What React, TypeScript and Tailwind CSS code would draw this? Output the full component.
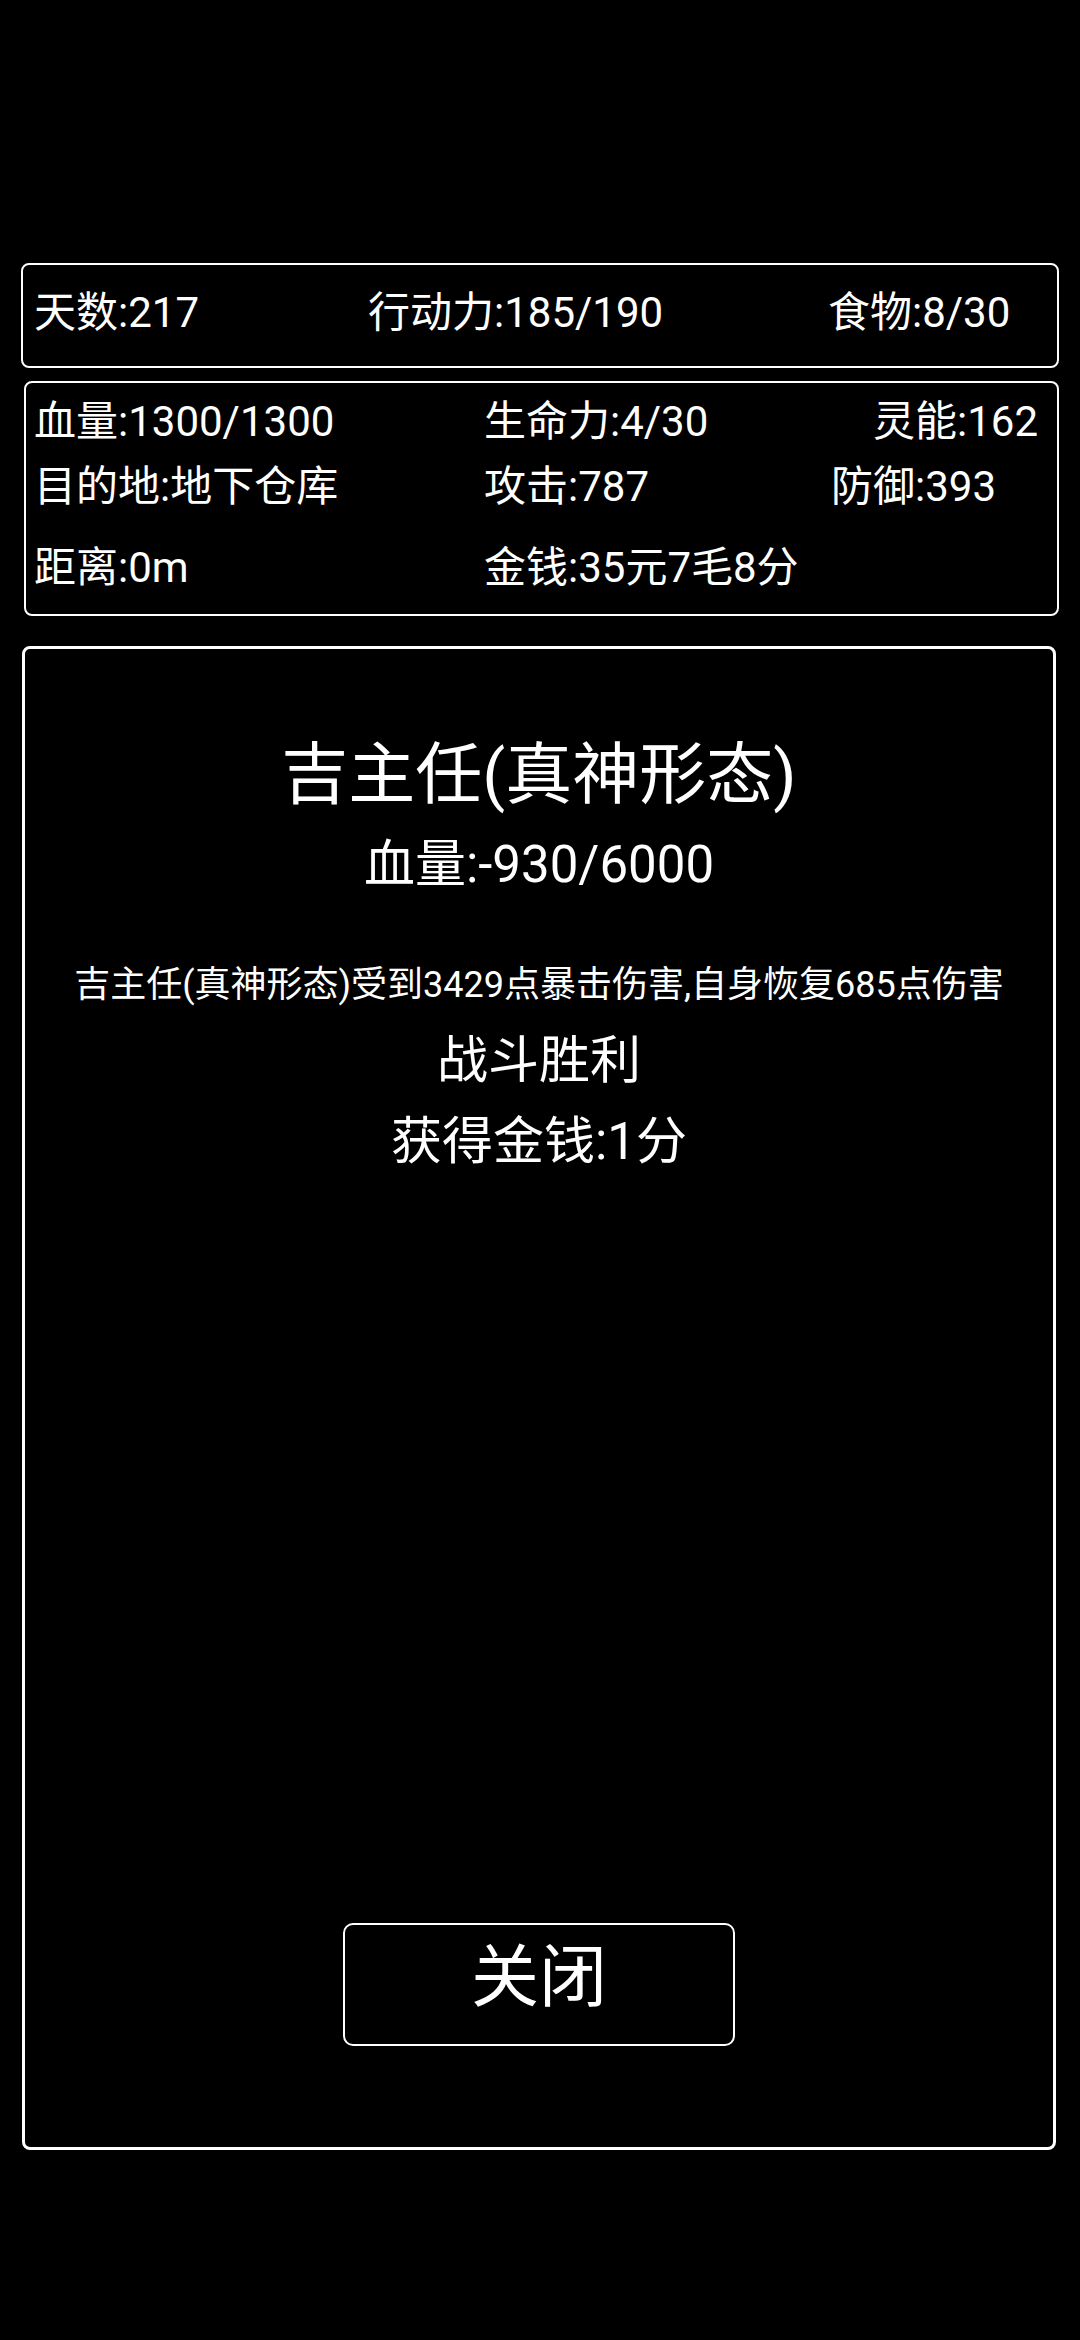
import React from 'react'

const font = { fontFamily: 'Roboto, "Noto Sans CJK SC", sans-serif' }

function StatBar() {
  return (
    <div className="ml-[21px] mr-[21px] flex h-[105px] items-center rounded-[8px] border-2 border-white pb-[5px] pl-[11px] text-[42px] leading-none">
      <span className="w-[334px]">天数:217</span>
      <span className="w-[460px]">行动力:185/190</span>
      <span>食物:8/30</span>
    </div>
  )
}

function PlayerPanel() {
  return (
    <div className="ml-[24px] mr-[21px] mt-[13px] h-[235px] rounded-[8px] border-2 border-white pl-[8px] pt-[14px] text-[42px] leading-none">
      <div className="flex h-[50px] items-center">
        <span className="w-[450px]">血量:1300/1300</span>
        <span className="w-[389px]">生命力:4/30</span>
        <span>灵能:162</span>
      </div>
      <div className="mt-[15px] flex h-[50px] items-center">
        <span className="w-[450px]">目的地:地下仓库</span>
        <span className="w-[347px]">攻击:787</span>
        <span>防御:393</span>
      </div>
      <div className="mt-[31px] flex h-[50px] items-center">
        <span className="w-[450px]">距离:0m</span>
        <span>金钱:35元7毛8分</span>
      </div>
    </div>
  )
}

function BattleResult() {
  return (
    <div className="ml-[22px] mr-[24px] mt-[30px] flex h-[1504px] flex-col items-center rounded-[8px] border-[3px] border-white">
      <div className="mt-[93px] text-[67px] leading-none">吉主任(真神形态)</div>
      <div className="mt-[30px] text-[51px] leading-none">血量:-930/6000</div>
      <div className="mt-[77px] text-[36px] leading-none">
        吉主任(真神形态)受到3429点暴击伤害,自身恢复685点伤害
      </div>
      <div className="mt-[32px] text-[51px] leading-none">战斗胜利</div>
      <div className="mt-[30px] text-[51px] leading-none">获得金钱:1分</div>

      <button
        className="mb-[101px] mt-auto flex h-[123px] w-[392px] items-center justify-center rounded-[10px] border-2 border-white pb-[14px] text-[68px] leading-none text-white"
        style={font}
      >
        关闭
      </button>
    </div>
  )
}

export default function App() {
  return (
    <div className="min-h-[2340px] bg-black pt-[263px] text-white" style={font}>
      <StatBar />
      <PlayerPanel />
      <BattleResult />
    </div>
  )
}
